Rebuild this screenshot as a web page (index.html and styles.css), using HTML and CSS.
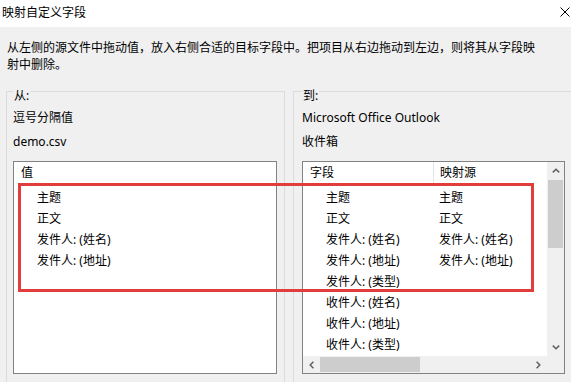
FILE: index.html
```html
<!DOCTYPE html>
<html lang="zh-CN">
<head>
<meta charset="utf-8">
<title>映射自定义字段</title>
<link rel="stylesheet" href="styles.css">
</head>
<body>
<div class="titlebar">
  <span class="title">映射自定义字段</span>
  <svg class="close" width="10" height="10" viewBox="0 0 10 10"><path d="M0.5 0.5 L9.5 9.5 M9.5 0.5 L0.5 9.5" stroke="#000" stroke-width="1" fill="none"/></svg>
</div>
<p class="desc">从左侧的源文件中拖动值，放入右侧合适的目标字段中。把项目从右边拖动到左边，则将其从字段映<br>射中删除。</p>
<div class="groups">
  <section class="group group-left">
    <span class="legend">从:</span>
    <div class="info info-first">逗号分隔值</div>
    <div class="info">demo.csv</div>
    <div class="listbox list-left">
      <div class="lhead">值</div>
      <div class="row">主题</div>
      <div class="row">正文</div>
      <div class="row">发件人: (姓名)</div>
      <div class="row">发件人: (地址)</div>
    </div>
  </section>
  <section class="group group-right">
    <span class="legend">到:</span>
    <div class="info info-first">Microsoft Office Outlook</div>
    <div class="info">收件箱</div>
    <div class="listbox list-right">
      <div class="viewport">
        <div class="thead"><div class="th th1">字段</div><div class="th th2">映射源</div></div>
        <div class="tr"><div class="td1">主题</div><div class="td2">主题</div></div>
        <div class="tr"><div class="td1">正文</div><div class="td2">正文</div></div>
        <div class="tr"><div class="td1">发件人: (姓名)</div><div class="td2">发件人: (姓名)</div></div>
        <div class="tr"><div class="td1">发件人: (地址)</div><div class="td2">发件人: (地址)</div></div>
        <div class="tr"><div class="td1">发件人: (类型)</div><div class="td2"></div></div>
        <div class="tr"><div class="td1">收件人: (姓名)</div><div class="td2"></div></div>
        <div class="tr"><div class="td1">收件人: (地址)</div><div class="td2"></div></div>
        <div class="tr"><div class="td1">收件人: (类型)</div><div class="td2"></div></div>
      </div>
      <div class="vscroll">
        <div class="sbtn"><svg width="8" height="5" viewBox="0 0 8 5"><path d="M0.8 4.4 L4 1.2 L7.2 4.4" stroke="#606060" stroke-width="1.5" fill="none"/></svg></div>
        <div class="vthumb"></div>
        <div class="vspace"></div>
        <div class="sbtn"><svg width="8" height="5" viewBox="0 0 8 5"><path d="M0.8 0.6 L4 3.8 L7.2 0.6" stroke="#606060" stroke-width="1.5" fill="none"/></svg></div>
      </div>
      <div class="hscroll">
        <div class="hbtn"><svg width="5" height="8" viewBox="0 0 5 8"><path d="M4.4 0.8 L1.2 4 L4.4 7.2" stroke="#606060" stroke-width="1.5" fill="none"/></svg></div>
        <div class="hthumb"></div>
        <div class="hspace"></div>
        <div class="hbtn"><svg width="5" height="8" viewBox="0 0 5 8"><path d="M0.6 0.8 L3.8 4 L0.6 7.2" stroke="#606060" stroke-width="1.5" fill="none"/></svg></div>
      </div>
      <div class="corner"></div>
    </div>
  </section>
</div>
<div class="annot"></div>
</body>
</html>
```
FILE: styles.css
```css
* { box-sizing: border-box; }
html, body { margin: 0; padding: 0; }
body {
  width: 571px;
  height: 382px;
  overflow: hidden;
  position: relative;
  background: #f0f0f0;
  font-family: "Noto Sans", "Noto Sans CJK SC", sans-serif;
  font-size: 12px;
  color: #000;
}
.titlebar {
  height: 27px;
  background: #fff;
  display: flex;
  justify-content: space-between;
  align-items: flex-start;
  padding: 0 1px 0 2px;
}
.title { line-height: 25px; }
.close { margin-top: 7px; display: block; }
.desc {
  margin: 12px 0 0;
  padding: 0 7px;
  line-height: 17px;
}
.groups {
  display: flex;
  gap: 8px;
  margin-top: 18px;
  padding-left: 6px;
}
.group {
  flex: none;
  width: 279px;
  height: 291px;
  border: 1px solid #dcdcdc;
  border-bottom: none;
  display: flex;
  flex-direction: column;
  align-items: flex-start;
}
.group-left { padding: 0 7px 0 6px; }
.group-right { padding: 0 7px 0 8px; }
.legend {
  margin-top: -3px;
  line-height: 14px;
  padding: 0 1px;
  background: #f0f0f0;
}
.info { line-height: 24px; white-space: nowrap; }
.info-first { margin-top: 3px; }
.listbox {
  flex: none;
  margin-top: 7px;
  height: 213px;
  border: 1px solid #828282;
  background: #fff;
}
.list-left { width: 264px; }
.lhead { height: 25px; line-height: 22px; padding-left: 7px; }
.row { height: 21px; line-height: 21px; padding-left: 23px; white-space: nowrap; }
.list-right {
  width: 263px;
  display: grid;
  grid-template-columns: 244px 17px;
  grid-template-rows: 194px 17px;
}
.viewport { overflow: hidden; }
.thead { display: flex; height: 25px; }
.th { line-height: 22px; height: 22px; }
.th1 { width: 130px; padding-left: 7px; }
.th2 { flex: 1; border-left: 1px solid #e5e5e5; padding-left: 6px; }
.tr { display: flex; height: 21px; line-height: 21px; white-space: nowrap; }
.td1 { width: 130px; padding-left: 23px; }
.td2 { flex: 1; padding-left: 6px; }
.vscroll {
  background: #f0f0f0;
  display: flex;
  flex-direction: column;
}
.sbtn {
  height: 17px;
  flex: none;
  display: flex;
  align-items: center;
  justify-content: center;
}
.vthumb {
  flex: none;
  height: 68px;
  margin: 1px 1px 0;
  background: #cdcdcd;
}
.vspace { flex: 1; }
.hscroll {
  background: #f0f0f0;
  display: flex;
}
.hbtn {
  width: 17px;
  flex: none;
  display: flex;
  align-items: center;
  justify-content: center;
}
.hthumb {
  flex: none;
  width: 100px;
  margin: 1px 0;
  background: #cdcdcd;
}
.hspace { flex: 1; }
.corner { background: #f0f0f0; }
.annot {
  position: absolute;
  left: 18px;
  top: 183px;
  width: 516px;
  height: 109px;
  border: 3px solid #e23d3d;
}
```
